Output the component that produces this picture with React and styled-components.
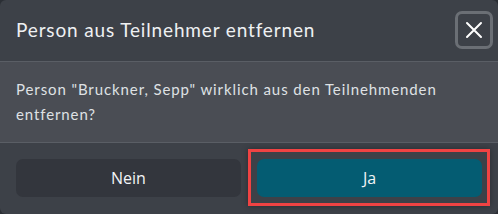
import styled, { createGlobalStyle } from 'styled-components'

const GlobalStyle = createGlobalStyle`
  html, body {
    margin: 0;
    padding: 0;
    background: #2b2f35;
  }
  * {
    box-sizing: border-box;
  }
`

const Dialog = styled.div`
  width: 498px;
  height: 214px;
  background-color: #3d4148;
  border-radius: 6px;
  overflow: hidden;
  display: flex;
  flex-direction: column;
  font-family: "Lato", "Noto Sans", sans-serif;
`

const Header = styled.div`
  height: 62px;
  display: flex;
  align-items: center;
  justify-content: space-between;
  padding: 0 5px 2px 16px;
  border-bottom: 1px solid #5a5e65;
`

const Title = styled.h2`
  margin: 0;
  font-size: 19px;
  font-weight: 400;
  color: #eef0f2;
  letter-spacing: 0.85px;
`

const CloseButton = styled.button`
  width: 38px;
  height: 38px;
  padding: 0;
  display: flex;
  align-items: center;
  justify-content: center;
  background: transparent;
  border: 3px solid #6b6f75;
  border-radius: 7px;
  color: #ffffff;
`

const Body = styled.div`
  height: 81px;
  padding: 15px 16px 0;
  background-color: #4a4d54;
  border-bottom: 1px solid #5a5e65;
`

const Message = styled.p`
  margin: 0;
  font-size: 15px;
  line-height: 25px;
  color: #dfe1e4;
  letter-spacing: 0.9px;
`

const Footer = styled.div`
  flex: 1;
  display: grid;
  grid-template-columns: 1fr 1fr;
  column-gap: 16px;
  padding: 16px 16px 0;
  align-items: start;
`

const ButtonWrap = styled.div`
  position: relative;
`

const Button = styled.button`
  width: 100%;
  height: 38px;
  border: none;
  border-radius: 7px;
  font-family: "Open Sans", "Noto Sans", sans-serif;
  font-size: 16px;
  color: #f2f4f6;
  background-color: ${props => props.$primary ? '#045c72' : '#33363d'};
`

const Highlight = styled.div`
  position: absolute;
  left: -9px;
  right: -8px;
  top: -10px;
  bottom: -9px;
  border: 3px solid #f04343;
  box-shadow: 0 0 6px rgba(0, 0, 0, 0.35);
  pointer-events: none;
`

const App = () => {
  return (
    <>
      <GlobalStyle />
      <Dialog>
        <Header>
          <Title>Person aus Teilnehmer entfernen</Title>
          <CloseButton aria-label="Schließen">
            <svg width="18" height="18" viewBox="0 0 18 18">
              <path d="M2 2 L16 16 M16 2 L2 16" stroke="#ffffff" strokeWidth="2" strokeLinecap="round" />
            </svg>
          </CloseButton>
        </Header>
        <Body>
          <Message>
            Person "Bruckner, Sepp" wirklich aus den Teilnehmenden entfernen?
          </Message>
        </Body>
        <Footer>
          <ButtonWrap>
            <Button>Nein</Button>
          </ButtonWrap>
          <ButtonWrap>
            <Highlight />
            <Button $primary>Ja</Button>
          </ButtonWrap>
        </Footer>
      </Dialog>
    </>
  )
}

export default App
